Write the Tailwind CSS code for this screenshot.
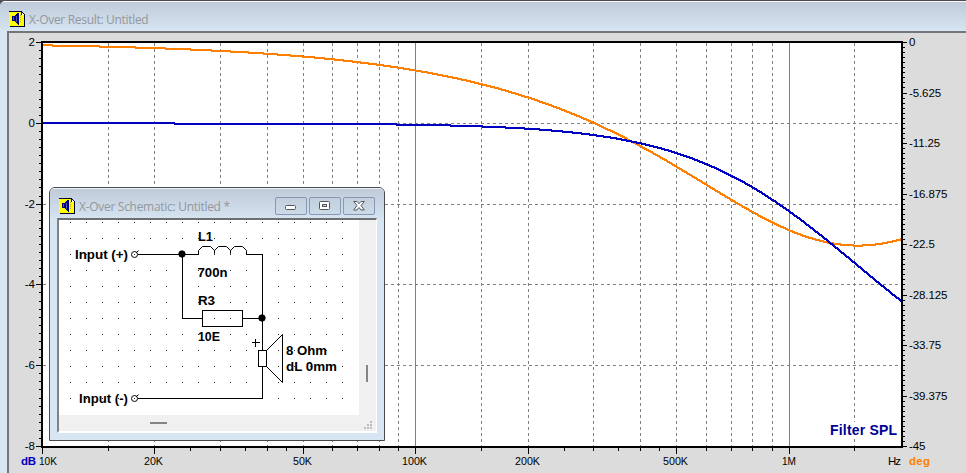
<!DOCTYPE html>
<html lang="en">
<head>
    <meta charset="UTF-8">
    <meta name="viewport" content="width=device-width, initial-scale=1.0">
    <title>X-Over Result: Untitled</title>
    <script src="https://cdn.jsdelivr.net/npm/@tailwindcss/browser@4"></script>
</head>
<body class="h-[473px] overflow-hidden bg-[#505050]">
    <div class="relative flex h-[473px] w-[966px] flex-col overflow-hidden rounded-tl-md border-t border-[#4b4b50] bg-[#d8e5f2]">
        <!-- Result window title bar -->
        <div class="flex h-[30px] shrink-0 items-center gap-1 border-t border-white/80 bg-linear-to-b from-[#bfcbd9] to-[#d7e4f1] pt-1 pl-[9px]">
            <svg class="size-4 shrink-0" viewBox="0 0 16 16" shape-rendering="crispEdges">
                <use href="#speaker-icon"/>
            </svg>
            <span class="mt-0.5 font-['Open_Sans',sans-serif] text-[12px] leading-4 tracking-[-0.31px] whitespace-nowrap text-[#92979d]">X-Over Result: Untitled</span>
        </div>
        <div class="ml-[7px] flex-1 border-t-2 border-l-2 border-[#747679] bg-[#dcdcdc]">
            <svg id="plot" class="block h-[440px] w-[957px] font-['Liberation_Sans',sans-serif] text-[11.5px]" viewBox="9 33 957 440">
                <rect x="42" y="42" width="860" height="404" fill="#fff"/>
                <g id="grid" shape-rendering="crispEdges" stroke="#808080" fill="none"></g>
                <g id="curves" shape-rendering="crispEdges" fill="none" stroke-width="2"></g>
                <rect x="42" y="42" width="860" height="405" fill="none" stroke="#000" stroke-width="2" shape-rendering="crispEdges"/>
                <g id="ticks" shape-rendering="crispEdges" stroke="#000"></g>
                <g id="labels" fill="#000"></g>
                <rect x="829" y="422" width="69" height="16" fill="#fff"/>
                <text x="830" y="435" textLength="67" font-size="14" font-weight="bold" fill="#000096">Filter SPL</text>
                <text x="21" y="465" textLength="15" font-weight="bold" fill="#0000c0">dB</text>
                <text x="888" y="465" textLength="13" fill="#000">Hz</text>
                <text x="909" y="465" textLength="21" font-weight="bold" fill="#ff8000">deg</text>
            </svg>
        </div>

        <!-- Schematic window -->
        <div class="absolute top-[186px] left-[49px] flex h-[254px] w-[336px] flex-col rounded-t-md border border-[#48494c] bg-[#d8e5f2] px-[7px] pb-[7px]">
            <div class="-mx-[7px] flex h-[30px] shrink-0 items-center rounded-t-[5px] border-t border-white/60 bg-linear-to-b from-[#bfcbd9] to-[#d5e2ef] pr-[9px] pl-[9px]">
                <svg class="mt-[5px] size-4 shrink-0" viewBox="0 0 16 16" shape-rendering="crispEdges">
                    <use href="#speaker-icon"/>
                </svg>
                <span class="mt-[7px] ml-1 flex-1 font-['Open_Sans',sans-serif] text-[12px] leading-4 tracking-[-0.29px] whitespace-nowrap text-[#92979d]">X-Over Schematic: Untitled *</span>
                <div class="mt-[5px] flex gap-[2px]">
                    <div class="flex h-[18px] w-8 items-center justify-center rounded-[2px] border border-[#8797b5] bg-linear-to-b from-[#c2cfdd] to-[#ccd9e7]">
                        <svg class="h-3 w-3" viewBox="0 0 12 12"><rect x=".5" y="5.500" width="10" height="4" rx="1" fill="#fff" stroke="#53565f"/></svg>
                    </div>
                    <div class="flex h-[18px] w-8 items-center justify-center rounded-[2px] border border-[#8797b5] bg-linear-to-b from-[#c2cfdd] to-[#ccd9e7]">
                        <svg class="h-3 w-3" viewBox="0 0 12 12"><rect x=".5" y="1.500" width="10" height="8" rx="1" fill="#fff" stroke="#53565f"/><rect x="3.500" y="4.500" width="4" height="2" fill="#c8d5e3" stroke="#53565f"/></svg>
                    </div>
                    <div class="flex h-[18px] w-8 items-center justify-center rounded-[2px] border border-[#8797b5] bg-linear-to-b from-[#c2cfdd] to-[#ccd9e7]">
                        <svg class="h-3 w-3" viewBox="0 0 12 12"><path d="M.7 1.500H4L6 3.700l2-2.200h3.300L8 5.500l3.300 4.500H8L6 7.500 4 10H.7L4 5.500z" fill="#fff" stroke="#53565f" stroke-linejoin="round"/></svg>
                    </div>
                </div>
            </div>
            <div class="flex-1 border-t-2 border-r border-b-2 border-l-2 border-t-[#6c6e70] border-r-white border-b-white border-l-[#808285] bg-[#f0f0f0]">
                <svg class="block h-[211px] w-[317px] font-['Liberation_Sans',sans-serif] text-[13.5px] font-bold" viewBox="59 220 317 211">
                    <rect x="59" y="220" width="300" height="195" fill="#fff"/>
                    <g fill="#000">
                        <text x="75" y="259" textLength="53" lengthAdjust="spacingAndGlyphs">Input (+)</text>
                        <text x="79" y="403" textLength="49" lengthAdjust="spacingAndGlyphs">Input (-)</text>
                        <text x="198" y="241" textLength="15" lengthAdjust="spacingAndGlyphs">L1</text>
                        <text x="197.500" y="277" textLength="30" lengthAdjust="spacingAndGlyphs">700n</text>
                        <text x="198" y="305" textLength="17" lengthAdjust="spacingAndGlyphs">R3</text>
                        <text x="198" y="341" textLength="22" lengthAdjust="spacingAndGlyphs">10E</text>
                        <text x="286" y="355" textLength="41" lengthAdjust="spacingAndGlyphs">8 Ohm</text>
                        <text x="286" y="371" textLength="51" lengthAdjust="spacingAndGlyphs">dL 0mm</text>
                    </g>
                    <g id="dots" fill="#333" shape-rendering="crispEdges"></g>
                    <g transform="translate(.5 .5)" fill="none" stroke="#000">
                        <!-- wires -->
                        <path shape-rendering="crispEdges" d="M137 254H198M246 254H262V350M182 254V318H202M242 318H262M262 366V398H137M251 342H259M255 338V346"/>
                        <!-- coil -->
                        <path d="M198 254V250L202 246H210L214 250V253V250L218 246H226L230 250V253V250L234 246H242L246 250V254"/>
                        <rect x="202" y="310" width="40" height="16" fill="#fff" shape-rendering="crispEdges"/>
                        <rect x="258" y="350" width="8" height="16" fill="#fff" shape-rendering="crispEdges"/>
                        <path d="M266 350L282 334V382L266 366"/>
                        <circle cx="134" cy="254" r="3"/>
                        <path d="M136 252L138 250"/>
                        <circle cx="134" cy="398" r="3"/>
                        <path d="M136 396L138 394"/>
                        <circle cx="181.500" cy="253.500" r="3.200" fill="#000"/>
                        <circle cx="261.500" cy="317.500" r="3.200" fill="#000"/>
                    </g>
                    <g fill="#333" shape-rendering="crispEdges">
                        <rect x="134" y="254" width="1" height="1"/><rect x="134" y="398" width="1" height="1"/>
                        <rect x="214" y="318" width="1" height="1"/><rect x="230" y="318" width="1" height="1"/>
                    </g>
                    <!-- scroll thumbs -->
                    <rect x="150" y="422" width="17" height="2" fill="#858585"/>
                    <rect x="366" y="365" width="2" height="17" fill="#858585"/>
                    <path d="M370 421h2v2h-2zM367 424h2v2h-2zM370 424h2v2h-2zM364 427h2v2h-2zM367 427h2v2h-2zM370 427h2v2h-2z" fill="#bcbcbc"/>
                </svg>
            </div>
        </div>
    </div>

    <svg class="hidden">
        <symbol id="speaker-icon" viewBox="0 0 16 16">
            <path d="M0 0H13V1H14V2H15V3H16V16H1V15H0z" fill="#000030"/>
            <path d="M0 1H12V4H15V15H0z" fill="#ff0"/>
            <path d="M12 1h1v1h1v1h1v1h-3z" fill="#fff"/>
            <path d="M12 1h1v3h-1z" fill="#000080"/>
            <path d="M3 5H6V4H7V3H8V2H10V14H9V13H8V12H7V11H6V10H3z" fill="#000080"/>
            <path d="M4 6h1v3H4zM7 5h1v6H7z" fill="#5858a8"/>
            <path d="M11 4h1v1h-1zM11 6h1v1h-1zM11 8h1v1h-1zM11 10h1v1h-1z" fill="#a8a820"/>
        </symbol>
    </svg>

    <script>
        const NS = 'http://www.w3.org/2000/svg';

        function add(parent, name, attrs, text) {
            const el = document.createElementNS(NS, name);
            for (const key in attrs) el.setAttribute(key, attrs[key]);
            if (text) el.textContent = text;
            document.getElementById(parent).appendChild(el);
        }

        const freqX = (f) => Math.floor(42.3 + 373.4 * Math.log10(f / 10000));

        // vertical grid lines and bottom ticks
        [15, 20, 30, 40, 50, 60, 70, 80, 90, 100, 150, 200, 300, 400, 500, 600, 700, 800, 900, 1000, 1500].forEach((k) => {
            const x = freqX(k * 1000) + 0.5;
            const solid = k === 100 || k === 1000;
            add('grid', 'path', { d: `M${x} 43V446`, 'stroke-dasharray': solid ? 'none' : '3 3' });
        });
        [10, 15, 20, 25, 30, 35, 40, 45, 50, 60, 70, 80, 90, 100, 150, 200, 250, 300, 350, 400, 450, 500, 600, 700, 800, 900, 1000, 1500].forEach((k) => {
            const x = freqX(k * 1000) + 0.5;
            const major = [10, 20, 50, 100, 200, 500, 1000].includes(k);
            add('ticks', 'path', { d: `M${x} 448V${major ? 454 : 451}` });
        });

        // level axis, 2 dB per division
        for (let i = 0; i <= 50; i++) {
            const y = Math.round(42 + i * 8.08) + 0.5;
            add('ticks', 'path', { d: `M${i % 10 ? 39 : 36} ${y}H41` });
        }
        for (let i = 0; i <= 5; i++) {
            const y = Math.round(42 + i * 80.8);
            if (i > 0 && i < 5) add('grid', 'path', { d: `M43 ${y + 0.5}H901`, 'stroke-dasharray': '3 3' });
            add('labels', 'text', { x: 35, y: y + 3.5, 'text-anchor': 'end' }, String(2 - 2 * i));
        }

        // phase axis
        for (let i = 0; i <= 80; i++) {
            const y = Math.round(42 + i * 5.05) + 0.5;
            add('ticks', 'path', { d: `M903 ${y}H${i % 10 ? 905 : 907}` });
        }
        for (let i = 0; i <= 8; i++) {
            const value = String(i ? -5.625 * i : 0);
            add('labels', 'text', { x: 909, y: Math.round(42 + i * 50.5) + 3.5, 'letter-spacing': '-0.1' }, value);
        }

        [['10K', 39, 18], ['20K', 144, 19], ['50K', 293, 19], ['100K', 402, 25], ['200K', 515, 25], ['500K', 663, 25], ['1M', 782, 14]].forEach(([label, x, w]) => {
            add('labels', 'text', { x, y: 465, textLength: w, lengthAdjust: 'spacingAndGlyphs' }, label);
        });

        // transfer function: 8 ohm load behind 700 nH in parallel with 10 ohm
        let level = '', phase = '';
        for (let x = 43; x < 901; x++) {
            const w = 2 * Math.PI * 10000 * Math.pow(10, (x - 42) / 373.7);
            const xl = w * 700e-9;
            const d = 100 + xl * xl;
            const re = 8 + 10 * xl * xl / d;
            const im = 100 * xl / d;
            const db = 20 * Math.log10(8 / Math.hypot(re, im));
            const deg = Math.atan2(im, re) * 180 / Math.PI;
            level += `M${x} ${Math.round(42.63 + (2 - db) * 40.4)}h2`;
            phase += `M${x} ${Math.round(42.5 + deg * 404 / 45)}h2`;
        }
        add('curves', 'path', { d: phase, stroke: '#ff8000' });
        add('curves', 'path', { d: level, stroke: '#0000c0' });

        // schematic grid
        for (let y = 222; y <= 398; y += 16) {
            for (let x = 70; x <= 342; x += 16) {
                add('dots', 'rect', { x, y, width: 1, height: 1 });
            }
        }
    </script>
</body>
</html>
